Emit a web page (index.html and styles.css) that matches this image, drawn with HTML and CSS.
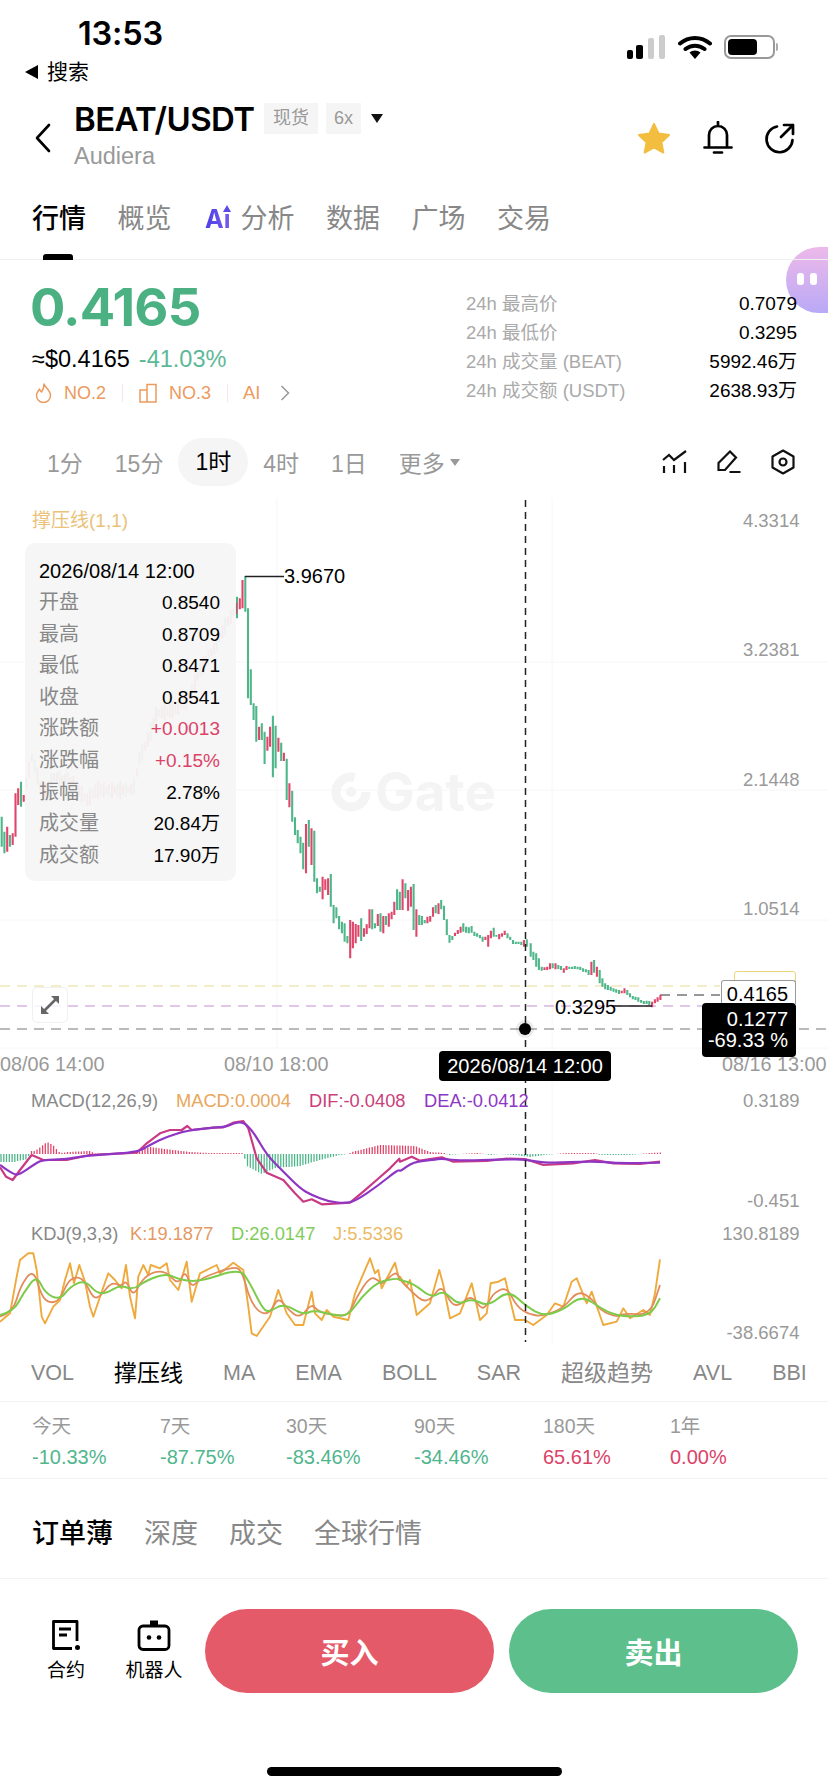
FILE: index.html
```html
<!DOCTYPE html>
<html lang="zh">
<head>
<meta charset="utf-8">
<title>BEAT/USDT</title>
<link rel="stylesheet" href="styles.css">
</head>
<body>
<div class="page">
  <div class="float-badge"><i></i><i></i></div>

  <header class="status">
    <div class="status-left">
      <div class="clock">13:53</div>
      <div class="backlink"><span class="backtri"></span>搜索</div>
    </div>
    <div class="status-right">
      <svg class="signal" width="38" height="24" viewBox="0 0 38 24"><rect x="0" y="15" width="6" height="9" rx="2" fill="#000"/><rect x="9" y="10" width="7" height="14" rx="2" fill="#000"/><rect x="21" y="3" width="6" height="21" rx="2" fill="#ccc"/><rect x="32" y="0" width="6" height="24" rx="2" fill="#ccc"/></svg>
      <svg class="wifi" width="34" height="24" viewBox="0 0 34 24"><path d="M2 8.500C10.500 1 23.500 1 32 8.500M7.500 14C13 9.500 21 9.500 26.500 14" fill="none" stroke="#000" stroke-width="4" stroke-linecap="round"/><path d="M11.500 17.500C14.500 14.800 19.500 14.800 22.500 17.500L17 24Z" fill="#000"/></svg>
      <span class="battery"><b></b></span>
    </div>
  </header>

  <nav class="nav">
    <svg class="back" width="17" height="30" viewBox="0 0 17 30"><path d="M15 2 3 15l12 13" fill="none" stroke="#000" stroke-width="2.600" stroke-linecap="round" stroke-linejoin="round"/></svg>
    <div class="title-col">
      <div class="title-row">
        <span class="pair">BEAT/USDT</span>
        <span class="tag">现货</span>
        <span class="tag tag-x">6x</span>
        <span class="caret"></span>
      </div>
      <div class="coin">Audiera</div>
    </div>
    <div class="nav-icons">
      <svg width="36" height="34" viewBox="0 0 36 34"><path d="M18 3l4.600 9.600 10.400 1.400-7.600 7.200 1.900 10.300L18 26.400 8.700 31.500l1.900-10.300L3 14l10.400-1.400z" fill="#f3bd3f" stroke="#f3bd3f" stroke-width="2" stroke-linejoin="round"/></svg>
      <svg width="30" height="34" viewBox="0 0 30 34"><path d="M15 1v3M6 26V14a9 9 0 0 1 18 0v12M1.500 26.500h27M11 31.500h8" fill="none" stroke="#000" stroke-width="2.700" stroke-linecap="round"/></svg>
      <svg width="32" height="32" viewBox="0 0 32 32"><path d="M13 4.500A13 13 0 1 0 28.500 18M17 15 29 3M20 3h9v9" fill="none" stroke="#000" stroke-width="2.700" stroke-linecap="round" stroke-linejoin="round"/></svg>
    </div>
  </nav>

  <div class="main-tabs">
    <span class="tab tab-on">行情</span>
    <span class="tab">概览</span>
    <span class="tab tab-ai"><em>Ai</em>分析</span>
    <span class="tab">数据</span>
    <span class="tab">广场</span>
    <span class="tab">交易</span>
  </div>

  <section class="ticker">
    <div class="ticker-left">
      <div class="last">0.4165</div>
      <div class="conv"><span>≈$0.4165</span><span class="pct">-41.03%</span></div>
      <div class="ranks">
        <svg width="19" height="20" viewBox="0 0 19 20"><path d="M10 1c1 3.500 6.500 6 6.500 11.500a7 7 0 0 1-14 0C2.500 9.500 4.500 8 5.500 6c.5 1.500 1 2.500 2 3C9 7 10 4 10 1Z" fill="none" stroke="#ec9a5e" stroke-width="1.500" stroke-linejoin="round"/></svg>
        <span>NO.2</span><i class="rank-sep"></i>
        <svg class="rank-bars" width="18" height="20" viewBox="0 0 18 20"><path d="M1 7h7v12H1zM8 1.500h9V19H8z" fill="none" stroke="#ec9a5e" stroke-width="1.500"/></svg>
        <span>NO.3</span><i class="rank-sep"></i>
        <span class="rank-ai">AI</span>
        <svg class="rank-more" width="10" height="18" viewBox="0 0 10 18"><path d="M1.500 2 8.500 9l-7 7" fill="none" stroke="#999" stroke-width="1.500"/></svg>
      </div>
    </div>
    <dl class="stats">
      <div class="stat"><dt>24h 最高价</dt><dd>0.7079</dd></div>
      <div class="stat"><dt>24h 最低价</dt><dd>0.3295</dd></div>
      <div class="stat"><dt>24h 成交量 (BEAT)</dt><dd>5992.46万</dd></div>
      <div class="stat"><dt>24h 成交额 (USDT)</dt><dd>2638.93万</dd></div>
    </dl>
  </section>

  <div class="frames">
    <span>1分</span><span>15分</span><span class="frame-on">1时</span><span>4时</span><span>1日</span>
    <span class="frame-more">更多<i></i></span>
    <div class="frame-icons">
      <svg width="25" height="24" viewBox="0 0 25 24"><path d="M1 10l6-5 5 5L24 1M2 16v7M12 15v8M23 12v11" fill="none" stroke="#111" stroke-width="2.200"/></svg>
      <svg width="24" height="24" viewBox="0 0 24 24"><path d="M1.500 13 13 1.500l6 6L8 20H1.500ZM12.500 22h11" fill="none" stroke="#111" stroke-width="2.200"/></svg>
      <svg width="24" height="26" viewBox="0 0 24 26"><path d="M12 1.500 22.500 7.500v11L12 24.500 1.500 18.500v-11Z" fill="none" stroke="#111" stroke-width="2.200" stroke-linejoin="round"/><circle cx="12" cy="13" r="3.500" fill="none" stroke="#111" stroke-width="2.200"/></svg>
    </div>
  </div>

  <section class="chart">
    <svg id="chart" class="chart-svg" width="828" height="852" viewBox="0 498 828 852">
      <g class="grid">
        <path d="M0 662H828M0 790H828M0 920H828M0 1048H828M277 498V1048M552 498V1345"/>
      </g>
      <g class="mark">
        <circle cx="351" cy="792" r="15" fill="none" stroke="#f4f4f4" stroke-width="9" stroke-dasharray="74 20"/>
        <circle cx="351" cy="792" r="5" fill="#f4f4f4"/>
        <text x="375" y="811" class="wm">Gate</text>
      </g>
      <path d="M0 986H720" class="dash dash-y"/>
      <path d="M0 1006H702" class="dash dash-p"/>
      <path d="M0 1029H828" class="dash dash-k"/>
      <path d="M660 995H720" class="dash dash-d"/>
      <g id="layers"></g>
      <path d="M245 576.500H284M613 1006H652" class="lead"/>
      <path d="M525.500 500V1342" class="cross"/>
      <circle cx="525" cy="1029" r="9" fill="#000" fill-opacity=".08"/>
      <circle cx="525" cy="1029" r="6" fill="#000"/>

      <text x="32" y="527" class="lab lab-sr">撑压线(1,1)</text>
      <text x="284" y="583" class="val">3.9670</text>
      <text x="555" y="1014" class="val">0.3295</text>

      <g class="ax">
        <text x="799.500" y="527">4.3314</text>
        <text x="799.500" y="656">3.2381</text>
        <text x="799.500" y="786">2.1448</text>
        <text x="799.500" y="915">1.0514</text>
        <text x="799.500" y="1107">0.3189</text>
        <text x="799.500" y="1207">-0.451</text>
        <text x="799.500" y="1240">130.8189</text>
        <text x="799.500" y="1339">-38.6674</text>
      </g>
      <g class="xl">
        <text x="0" y="1071">08/06 14:00</text>
        <text x="224" y="1071">08/10 18:00</text>
        <text x="722" y="1071">08/16 13:00</text>
      </g>

      <text y="1107" class="lab"><tspan x="31" class="c-g">MACD(12,26,9)</tspan><tspan x="176" class="c-o">MACD:0.0004</tspan><tspan x="309" class="c-r">DIF:-0.0408</tspan><tspan x="424" class="c-v">DEA:-0.0412</tspan></text>
      <text y="1240" class="lab"><tspan x="31" class="c-g">KDJ(9,3,3)</tspan><tspan x="130" class="c-k">K:19.1877</tspan><tspan x="231" class="c-d">D:26.0147</tspan><tspan x="333" class="c-j">J:5.5336</tspan></text>
    </svg>

    <div class="tip">
      <div class="tip-date">2026/08/14 12:00</div>
      <div class="tip-row"><span>开盘</span><b>0.8540</b></div>
      <div class="tip-row"><span>最高</span><b>0.8709</b></div>
      <div class="tip-row"><span>最低</span><b>0.8471</b></div>
      <div class="tip-row"><span>收盘</span><b>0.8541</b></div>
      <div class="tip-row"><span>涨跌额</span><b class="up">+0.0013</b></div>
      <div class="tip-row"><span>涨跌幅</span><b class="up">+0.15%</b></div>
      <div class="tip-row"><span>振幅</span><b>2.78%</b></div>
      <div class="tip-row"><span>成交量</span><b>20.84万</b></div>
      <div class="tip-row"><span>成交额</span><b>17.90万</b></div>
    </div>

    <div class="expand">
      <svg width="20" height="20" viewBox="0 0 20 20"><path d="M3 17 17 3" stroke="#666" stroke-width="2.600"/><path d="M11 1h8v8ZM1 11v8h8Z" fill="#666"/></svg>
    </div>
    <div class="px-last-back"></div>
    <div class="px-last">0.4165</div>
    <div class="px-diff">0.1277<br>-69.33 %</div>
    <div class="px-date">2026/08/14 12:00</div>
  </section>

  <div class="ind-tabs">
    <span>VOL</span><span class="ind-on">撑压线</span><span>MA</span><span>EMA</span><span>BOLL</span><span>SAR</span><span class="ind-cn">超级趋势</span><span>AVL</span><span>BBI</span>
  </div>

  <div class="periods">
    <div class="period"><span>今天</span><b class="dn">-10.33%</b></div>
    <div class="period"><span>7天</span><b class="dn">-87.75%</b></div>
    <div class="period"><span>30天</span><b class="dn">-83.46%</b></div>
    <div class="period"><span>90天</span><b class="dn">-34.46%</b></div>
    <div class="period"><span>180天</span><b class="up">65.61%</b></div>
    <div class="period"><span>1年</span><b class="up">0.00%</b></div>
  </div>

  <div class="book-tabs">
    <span class="book-on">订单薄</span><span>深度</span><span>成交</span><span>全球行情</span>
  </div>

  <footer class="actions">
    <div class="act">
      <svg width="30" height="32" viewBox="0 0 30 32"><path d="M26 22V2.500H2.500v27H21M8 10h12M8 16h8" fill="none" stroke="#000" stroke-width="2.800" stroke-linejoin="round"/><circle cx="26.500" cy="28.500" r="2.500" fill="#000"/></svg>
      <span>合约</span>
    </div>
    <div class="act">
      <svg width="34" height="32" viewBox="0 0 34 32"><path d="M13 1.500h8V7h-8z" fill="#000"/><rect x="2" y="7" width="30" height="23.500" rx="4" fill="none" stroke="#000" stroke-width="2.800"/><circle cx="12" cy="18.500" r="2.300" fill="#000"/><circle cx="22" cy="18.500" r="2.300" fill="#000"/></svg>
      <span>机器人</span>
    </div>
    <div class="btn btn-buy">买入</div>
    <div class="btn btn-sell">卖出</div>
  </footer>
  <div class="home"><i></i></div>
</div>
<script src="chart.js"></script>
</body>
</html>
```
FILE: styles.css
```css
* { box-sizing: border-box; }
html, body { margin: 0; padding: 0; background: #fff; }
body { font-family: "Liberation Sans", "Noto Sans CJK SC", sans-serif; color: #000; }
.page { position: relative; width: 828px; height: 1792px; overflow: hidden; background: #fff; }

.float-badge { position: absolute; top: 247px; right: 0; width: 42px; height: 66px; border-radius: 33px 0 0 33px; background: linear-gradient(#edb9ea, #b9a9f6); display: flex; gap: 6px; padding: 26px 0 0 11px; }
.float-badge i { width: 7px; height: 12px; border-radius: 3px; background: #fff; }

.status { height: 98px; display: flex; justify-content: space-between; }
.status-left { padding-top: 15px; }
.clock { font: 600 32.500px/38px Inter, sans-serif; padding-left: 78px; letter-spacing: -.2px; }
.backlink { display: flex; align-items: center; font-size: 21px; line-height: 28px; margin-top: 5px; padding-left: 25px; gap: 9px; }
.backtri { width: 0; height: 0; border: 7px solid transparent; border-left: 0; border-right: 13px solid #000; }
.status-right { display: flex; gap: 13px; padding: 35px 53px 0 0; align-items: flex-start; }
.battery { position: relative; width: 51px; height: 24px; border: 2px solid #999; border-radius: 7px; padding: 2px; margin-left: -1px; }
.battery b { display: block; width: 29px; height: 16px; background: #000; border-radius: 4px; }
.battery::after { content: ""; position: absolute; right: -5px; top: 6px; width: 2px; height: 8px; background: #aaa; border-radius: 0 2px 2px 0; }

.nav { height: 90px; display: flex; align-items: flex-start; padding-left: 34px; position: relative; }
.back { margin-top: 25px; }
.title-col { margin-left: 23px; }
.title-row { display: flex; align-items: center; height: 36px; margin-top: 3px; }
.pair { font: 600 33px/36px Inter, sans-serif; letter-spacing: -.6px; width: 190px; white-space: nowrap; }
.tag { background: #f5f5f5; color: #999; font-size: 18px; line-height: 31px; height: 31px; padding: 0 9px; margin: -2px 8px 0 0; }
.tag-x { padding: 0 8px; }
.caret { width: 0; height: 0; border: 6.500px solid transparent; border-bottom: 0; border-top: 9px solid #111; margin: -2px 0 0 2px; }
.coin { font-size: 23.500px; line-height: 26px; color: #999; margin-top: 6px; }
.nav-icons { position: absolute; left: 636px; top: 23px; display: flex; align-items: center; gap: 31px; }

.main-tabs { height: 72px; padding: 15px 0 0 32px; display: flex; gap: 31.500px; border-bottom: 1px solid #eee; position: relative; }
.tab { font-size: 27px; line-height: 32px; color: #888; white-space: nowrap; }
.tab-on { color: #000; font-weight: 500; position: relative; }
.tab-on::after { content: ""; position: absolute; left: 11px; top: 51px; width: 30px; height: 6px; border-radius: 3px 3px 0 0; background: #000; }
.tab-ai { display: flex; gap: 10px; margin-left: 2px; }
.tab-ai em { position: relative; font: 700 25px/32px Inter, sans-serif; background: linear-gradient(90deg, #4a3fe6, #7a5cf0); -webkit-background-clip: text; background-clip: text; color: transparent; }
.tab-ai em::after { content: ""; position: absolute; right: 0; top: 2px; width: 0; height: 0; border: 4px solid transparent; border-top: 0; border-bottom: 7px solid #5a4be6; }

.ticker { height: 178px; display: flex; position: relative; padding-left: 30px; }
.ticker-left { width: 436px; }
.last { font: 700 52.500px/52px Inter, sans-serif; color: #4bb183; margin-top: 21px; letter-spacing: -.8px; }
.conv { display: flex; gap: 9px; font-size: 23.500px; line-height: 30px; margin-top: 11px; padding-left: 2px; }
.pct { color: #5cb998; }
.ranks { display: flex; align-items: center; height: 24px; margin-top: 7px; font-size: 18px; color: #ec9a5e; padding-left: 4px; }
.ranks span { margin-left: 11px; white-space: nowrap; }
.rank-sep { width: 1px; height: 18px; background: #f1e9e2; margin: 0 16px; }
.ranks .rank-bars + span { margin-left: 12px; }
.ranks .rank-ai { margin-left: -1px; font-size: 18.500px; }
.rank-more { margin-left: 19px; }
.stats { margin: 29px 0 0; width: 331px; }
.stat { display: flex; justify-content: space-between; height: 29px; line-height: 29px; font-size: 19px; }
.stat dt { color: #aaa; font-size: 18.500px; }
.stat dd { margin: 0; color: #000; }

.frames { height: 48px; display: flex; align-items: center; gap: 32px; padding-left: 47px; font-size: 23px; color: #999; white-space: nowrap; }
.frame-on { color: #000; background: #f5f5f5; line-height: 48px; padding: 0 17px; margin: 0 -17px; border-radius: 24px; }
.frame-more { display: flex; align-items: center; gap: 5px; }
.frame-more i { width: 0; height: 0; border: 5px solid transparent; border-bottom: 0; border-top: 7px solid #999; }
.frame-icons { margin-left: auto; padding-right: 33px; display: flex; align-items: center; gap: 30px; }

.chart { position: relative; height: 852px; margin-top: 12px; }
.chart-svg { display: block; }
.grid path { stroke: #f6f6f6; stroke-width: 1; fill: none; }
.wm { font: 700 53px Inter, sans-serif; fill: #f4f4f4; }
.dash { fill: none; stroke-width: 1.200; stroke-dasharray: 10 7; }
.dash-y { stroke: #ecdc96; }
.dash-p { stroke: #c490d6; }
.dash-k { stroke: #777; }
.dash-d { stroke: #333; }
.lead { stroke: #222; stroke-width: 1.400; fill: none; }
.cross { stroke: #222; stroke-width: 1.500; stroke-dasharray: 7 5; fill: none; }
.lab { font-size: 18.300px; }
.lab-sr { fill: #eac27a; font-size: 19px; }
.val { font-size: 20px; fill: #000; }
.ax text { font-size: 18.500px; fill: #999; text-anchor: end; }
.xl text { font-size: 19.800px; fill: #999; }
.c-g { fill: #888; }
.c-o { fill: #e9a65c; }
.c-r { fill: #c93f7b; }
.c-v { fill: #8d37c5; }
.c-k { fill: #e39a66; }
.c-d { fill: #80cc5a; }
.c-j { fill: #eabb66; }

.tip { position: absolute; left: 25px; top: 45px; width: 211px; height: 338px; border-radius: 10px; background: rgba(246, 246, 246, .95); padding: 12px 16px 0 14px; font-size: 19px; }
.tip-date { line-height: 32px; font-size: 20px; }
.tip-row { display: flex; justify-content: space-between; line-height: 31.600px; }
.tip-row span { color: #888; font-size: 20px; }
.tip-row b { font-weight: 400; }
b.up { color: #dc4268; font-weight: 400; }
b.dn { color: #50b68d; font-weight: 400; }

.expand { position: absolute; left: 32px; top: 489px; width: 36px; height: 36px; border: 1px solid #f0f0f0; border-radius: 5px; background: rgba(255, 255, 255, .8); display: flex; align-items: center; justify-content: center; }
.px-last-back { position: absolute; left: 734px; top: 473px; width: 62px; height: 20px; border: 1px solid #e8d57a; border-radius: 3px 3px 0 0; }
.px-last { position: absolute; left: 721px; top: 482px; width: 75px; height: 24px; border: 1px solid #999; border-bottom: 0; border-radius: 3px 3px 0 0; background: #fff; text-align: right; padding-right: 7px; font-size: 20px; line-height: 26px; }
.px-diff { position: absolute; left: 702px; top: 505px; width: 94px; height: 54px; background: #000; color: #fff; border-radius: 4px; text-align: right; padding: 6px 8px 0 0; font-size: 20px; line-height: 21px; }
.px-date { position: absolute; left: 439px; top: 553px; width: 172px; height: 30px; background: #000; color: #fff; border-radius: 4px; text-align: center; font-size: 20px; line-height: 30px; }

.ind-tabs { height: 52px; border-bottom: 1px solid #f3f3f3; display: flex; gap: 40px; padding: 8px 0 0 31px; font-size: 21.500px; line-height: 30px; color: #888; white-space: nowrap; overflow: hidden; }
.ind-on { color: #000; font-size: 23px; }
.ind-cn { font-size: 23px; }

.periods { height: 77px; display: grid; grid-template-columns: 128px 126px 128px 129px 127px 100px; padding-left: 32px; border-bottom: 1px solid #f3f3f3; }
.period { display: flex; flex-direction: column; }
.period span { font-size: 19.500px; line-height: 24px; color: #999; margin-top: 12px; }
.period b { font-size: 20px; line-height: 24px; margin-top: 7px; }

.book-tabs { height: 100px; display: flex; gap: 31px; padding: 38px 0 0 32px; border-bottom: 1px solid #f3f3f3; font-size: 27px; line-height: 34px; color: #888; }
.book-on { color: #000; font-weight: 500; }

.actions { height: 186px; display: flex; padding: 30px 30px 0 24px; align-items: flex-start; }
.act { width: 84px; margin-right: 4px; display: flex; flex-direction: column; align-items: center; font-size: 19px; line-height: 24px; padding-top: 10px; gap: 8px; }
.act + .act { margin-right: 9px; }
.btn { width: 289px; height: 84px; border-radius: 42px; color: #fff; display: flex; align-items: center; justify-content: center; font-size: 29px; font-weight: 700; }
.btn-buy { background: #e55a68; margin-right: 15px; }
.btn-sell { background: #5dbf8c; }
.home { position: absolute; left: 267px; top: 1767px; width: 295px; height: 9px; }
.home i { display: block; height: 9px; border-radius: 5px; background: #000; }
```
FILE: chart.js
```js
(function () {
  var NS = 'http://www.w3.org/2000/svg';
  var layers = document.getElementById('layers');
  var GREEN = '#4fb68a', RED = '#e0466a';

  function add(d, stroke, width) {
    var p = document.createElementNS(NS, 'path');
    p.setAttribute('d', d);
    p.setAttribute('fill', 'none');
    p.setAttribute('stroke', stroke);
    p.setAttribute('stroke-width', width);
    p.setAttribute('stroke-linejoin', 'round');
    layers.appendChild(p);
  }

  /* candles: g|r top,bottom measured in a 3x crop of the chart */
  var paths = { g: '', r: '' };
  function candles(str, x0, step, ox, oy) {
    str.trim().split(/\s+/).forEach(function (c, i) {
      var kind = c[0], v = c.slice(1).split(',');
      var x = ox + (x0 + step * i) / 3;
      paths[kind] += 'M' + x.toFixed(1) + ' ' + (oy + v[0] / 3).toFixed(1) + 'V' + (oy + v[1] / 3).toFixed(1);
    });
  }

  candles('g740,830 g785,850 r770,845 g795,830 r790,825 r670,800 r655,705 g635,710', 5, 8.28, 0, 570);

  /* the stretch behind the tooltip */
  var env = [[70,690],[95,560],[110,610],[130,680],[160,620],[220,640],[260,690],[290,660],[400,660],[420,560],[440,520],[470,430],[520,420],[560,400],[600,300],[640,240],[680,160],[712,110]];
  function envAt(x) {
    for (var i = 1; i < env.length; i++) {
      if (x <= env[i][0]) {
        var a = env[i - 1], b = env[i];
        return a[1] + (b[1] - a[1]) * (x - a[0]) / (b[0] - a[0]);
      }
    }
    return env[env.length - 1][1];
  }
  var hidden = [];
  for (var hx = 71, n = 0; hx < 712; hx += 8.28, n++) {
    var mid = envAt(hx), half = 10 + (n * 7) % 19;
    hidden.push((n % 3 === 1 ? 'g' : 'r') + (mid - half).toFixed(0) + ',' + (mid + half).toFixed(0));
  }
  candles(hidden.join(' '), 71, 8.28, 0, 570);

  candles('g110,175 r115,148 r60,145 g48,155 g145,415 g328,435 g430,480 g438,545 r500,540 g490,540 g515,612 r530,572 r500,560 g467,652 g497,625 r533,575 g548,603 r578,603 g596,720 r670,742 g692,785 g772,825 g810,850 g830,880 g848,928 r792,940 g780,860 r805,915 g812,965 g955,1000 g980,995 r950,1018 r958,990 r955,1005 g942,1040 g1035,1090 g1042,1075 g1068,1108 g1085,1120 g1090,1145 g1128,1150 r1080,1195 r1085,1165 r1092,1150 r1095,1130 g1075,1143 r1105,1130 r1093,1122 r1048,1105 g1048,1108 g1090,1105 r1062,1098 g1060,1115 r1068,1120 g1068,1095 r1060,1100 r1055,1078 r1025,1065 g988,1050 g995,1050 r958,1050 g970,1015 r990,1052 r980,1040 g972,1110 r1048,1130 g1065,1095 g1068,1095 g1080,1090 r1070,1090 r1068,1085 r1042,1070 g1035,1060 r1030,1062 g1020,1048 g1037,1080 g1078,1125 g1125,1148 g1128,1140 r1118,1128 r1110,1122 r1100,1118 g1090,1115 g1100,1118 g1102,1120 g1098,1118 g1115,1128 g1120,1130 g1125,1135 g1130,1145 r1130,1140 r1125,1160 r1112,1135 g1103,1130 g1125,1130 r1122,1138 r1120,1130 r1112,1125 g1120,1135 g1130,1140 g1140,1152 g1145,1152 g1145,1152 g1145,1155 r1140,1160 g1138,1160', 21, 8.28, 230, 560);

  candles('g70,110 g95,120 g100,140 g115,150 g140,152 r142,150 r140,150 r130,148 g130,145 r130,148 g135,147 g138,150 r145,158 r138,150 g140,147 g140,147 g138,147 g140,148 g140,150 g145,155 g148,157 g150,165 r125,165 g120,158 r140,170 g150,190 g175,200 g190,208 g195,210 g200,212 g205,215 g208,218 g210,222 r212,220 r205,220 g210,225 g220,232 g228,238 g230,240 g232,245 g240,248 g243,252 g242,252 g243,255 r245,262 r238,250 r232,245 r225,240', 152, 8.28, 480, 920);

  add(paths.g, GREEN, 2.1);
  add(paths.r, RED, 2.1);

  /* MACD histogram */
  var hist = [[0,-8],[16,-8],[17,-7],[28,-5],[30,3],[35,3],[47,12],[53,9],[60,1],[68,2],[90,3],[95,0.5],[136,0.5],[138,2],[150,7],[165,5],[190,2],[210,1],[243,1],[247,-12],[262,-20],[275,-14],[300,-12],[320,-6],[340,-1],[348,0],[352,2],[380,9],[415,8],[430,2],[445,1],[448,-1],[460,0],[478,1],[490,-1],[500,0],[515,-1],[530,-3],[545,-1],[565,1],[595,1],[600,-1],[630,-1],[650,1],[662,1.5]];
  function histAt(x) {
    for (var i = 1; i < hist.length; i++) {
      if (x <= hist[i][0]) {
        var a = hist[i - 1], b = hist[i];
        return a[1] + (b[1] - a[1]) * (x - a[0]) / (b[0] - a[0]);
      }
    }
    return 0;
  }
  var hg = '', hr = '';
  for (var x = 1; x < 662; x += 2.77) {
    var h = histAt(x), seg = 'M' + x.toFixed(1) + ' 1154V' + (1154 - h).toFixed(1);
    if (h > 0) hr += seg; else hg += seg;
  }
  add(hg, GREEN, 1.3);
  add(hr, RED, 1.3);

  /* indicator lines, measured in two 3x crops; smooth ones pass through segment midpoints */
  function line(ptsA, ptsB, color, width, smooth) {
    var all = ptsA.map(function (p) { return [p[0] / 3, 1080 + p[1] / 3]; })
      .concat(ptsB.map(function (p) { return [400 + p[0] / 3, 1080 + p[1] / 3]; }));
    var d = 'M' + all[0][0].toFixed(1) + ' ' + all[0][1].toFixed(1);
    for (var i = 1; i < all.length; i++) {
      var p = all[i];
      if (smooth && i < all.length - 1) {
        var q = all[i + 1];
        d += 'Q' + p[0].toFixed(1) + ' ' + p[1].toFixed(1) + ' ' + ((p[0] + q[0]) / 2).toFixed(1) + ' ' + ((p[1] + q[1]) / 2).toFixed(1);
      } else {
        d += 'L' + p[0].toFixed(1) + ' ' + p[1].toFixed(1);
      }
    }
    add(d, color, width);
  }

  line([[0,262],[18,290],[38,300],[60,270],[95,225],[130,240],[200,240],[270,225],[410,218],[440,190],[480,160],[510,150],[545,150],[562,138],[575,150],[640,143],[670,142],[700,128],[730,123],[745,145],[770,235],[800,278],[850,300],[885,340],[910,365],[935,358],[965,373],[1050,368],[1090,335],[1130,300],[1170,265],[1198,236]],
       [[0,245],[35,230],[60,242],[125,232],[160,245],[260,243],[320,236],[375,237],[430,255],[520,250],[585,240],[640,250],[720,252],[780,245]], '#c93a85', 2.2);
  line([[0,255],[40,285],[60,283],[100,255],[125,240],[200,238],[270,225],[410,218],[450,195],[500,170],[560,152],[640,143],[680,140],[700,130],[730,125],[760,155],[800,225],[850,275],[900,325],[935,345],[985,365],[1040,370],[1070,360],[1130,320],[1195,268]],
       [[0,275],[40,245],[100,240],[125,235],[170,242],[320,238],[375,238],[440,250],[580,243],[650,250],[780,248]], '#8f35c4', 2.2, true);

  line([[0,725],[30,700],[50,590],[60,540],[85,520],[100,520],[110,570],[125,710],[135,730],[160,680],[180,660],[195,600],[210,550],[222,610],[238,555],[255,605],[270,680],[280,710],[300,650],[325,580],[345,600],[365,625],[378,555],[390,650],[405,715],[415,590],[430,555],[445,585],[452,555],[480,565],[500,550],[510,600],[535,630],[560,545],[575,665],[600,580],[650,555],[660,580],[700,548],[730,570],[745,680],[755,760],[770,768],[810,710],[835,630],[860,700],[885,735],[910,735],[935,635],[945,700],[965,720],[980,690],[1000,710],[1045,720],[1065,640],[1110,535],[1125,580],[1135,570],[1145,625],[1185,548],[1198,600]],
       [[0,590],[20,620],[30,600],[50,705],[90,670],[118,570],[130,615],[150,715],[180,700],[215,610],[240,720],[260,700],[272,610],[295,605],[315,595],[345,720],[375,720],[400,735],[440,705],[465,670],[490,680],[515,605],[530,595],[560,670],[575,635],[610,735],[650,725],[670,685],[690,715],[730,690],[750,705],[765,640],[780,538]], '#eeaa3c', 1.9);
  line([[0,710],[40,695],[60,620],[100,565],[125,650],[150,670],[180,660],[205,600],[235,590],[255,605],[280,655],[300,650],[335,605],[365,620],[378,600],[400,650],[425,600],[460,575],[500,575],[535,615],[555,570],[575,625],[600,595],[700,560],[725,570],[750,660],[780,700],[810,700],[835,650],[865,690],[900,715],[935,670],[955,695],[1000,705],[1045,708],[1070,650],[1110,590],[1135,600],[1145,615],[1185,575],[1198,590]],
       [[0,600],[40,640],[70,665],[95,655],[125,615],[155,675],[180,675],[215,645],[245,690],[265,670],[280,640],[320,620],[350,680],[390,705],[430,708],[490,685],[535,630],[580,660],[600,690],[650,712],[670,700],[750,705],[780,615]], '#e28c5c', 1.8, true);
  line([[0,705],[40,695],[70,640],[110,585],[135,640],[180,660],[210,620],[255,600],[290,640],[320,640],[360,615],[400,630],[440,600],[500,580],[540,600],[600,605],[720,565],[750,610],[790,690],[810,695],[850,670],[910,705],[940,690],[1000,705],[1045,708],[1085,650],[1135,605],[1190,595]],
       [[0,600],[40,610],[95,655],[130,630],[175,675],[215,655],[265,680],[325,630],[380,680],[430,708],[490,690],[545,645],[610,690],[660,710],[750,708],[780,655]], '#7ccb4a', 2, true);
})();
```
